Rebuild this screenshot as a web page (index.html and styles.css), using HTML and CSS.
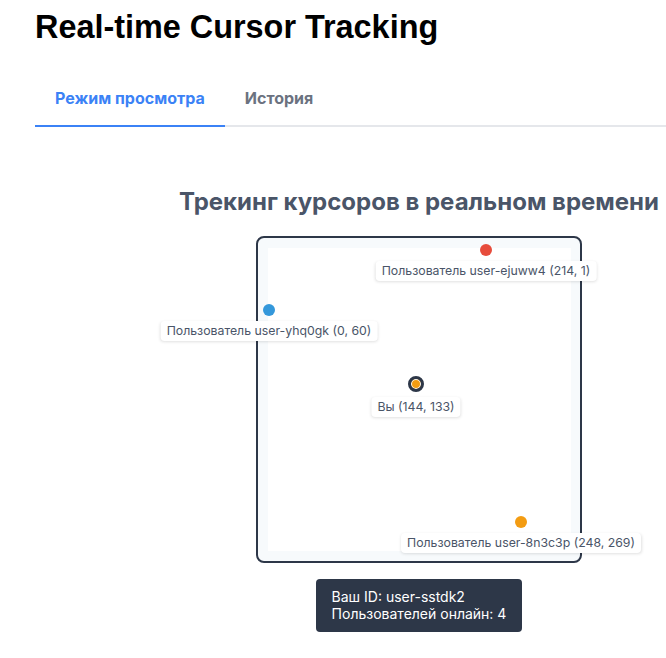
FILE: index.html
```html
<!DOCTYPE html>
<html lang="ru">
<head>
<meta charset="utf-8">
<link rel="stylesheet" href="styles.css">
</head>
<body>
<div class="app">
  <h1 class="title">Real-time Cursor Tracking</h1>
  <nav class="tabs">
    <div class="tab active">Режим просмотра</div>
    <div class="tab">История</div>
  </nav>
  <section class="tracker">
    <h2 class="tracker-title">Трекинг курсоров в реальном времени</h2>
    <div class="board">
      <div class="canvas"></div>
      <div class="cursor" style="left:228px; top:12px;">
        <span class="dot red"></span>
        <span class="label">Пользователь user-ejuww4 (214, 1)</span>
      </div>
      <div class="cursor" style="left:11px; top:72px;">
        <span class="dot blue"></span>
        <span class="label">Пользователь user-yhq0gk (0, 60)</span>
      </div>
      <div class="cursor me" style="left:158px; top:146px;">
        <span class="dot orange self"></span>
        <span class="label">Вы (144, 133)</span>
      </div>
      <div class="cursor" style="left:263px; top:284px;">
        <span class="dot orange"></span>
        <span class="label">Пользователь user-8n3c3p (248, 269)</span>
      </div>
    </div>
    <div class="info">
      <div>Ваш ID: user-sstdk2</div>
      <div>Пользователей онлайн: 4</div>
    </div>
  </section>
</div>
</body>
</html>
```

FILE: styles.css
```css
html, body {
  margin: 0;
  padding: 0;
  background: #ffffff;
  overflow: hidden;
}

.app {
  width: 768px;
  padding: 4px 0 0 35px;
}

.title {
  margin: 0;
  font-family: "Liberation Sans", Arial, sans-serif;
  font-weight: 700;
  font-size: 32.4px;
  line-height: 46px;
  color: #000;
}

.tabs {
  display: flex;
  margin-top: 26px;
  border-bottom: 2px solid #e5e7eb;
  font-family: Inter, "Noto Sans", sans-serif;
  font-weight: 700;
  font-size: 16px;
}

.tab {
  padding: 12px 20px 17px;
  margin-bottom: -2px;
  color: #6b7280;
  border-bottom: 2px solid transparent;
  line-height: 20px;
}

.tab.active {
  color: #3b82f6;
  border-bottom-color: #3b82f6;
}

.tracker {
  display: flex;
  flex-direction: column;
  align-items: center;
  font-family: Inter, "Noto Sans", sans-serif;
}

.tracker-title {
  margin: 60px 0 19px;
  font-size: 24px;
  line-height: 30px;
  font-weight: 700;
  color: #4a5568;
}

.board {
  position: relative;
  width: 303px;
  height: 303px;
  padding: 10px 9px 10px 10px;
  border: 2px solid #2d3748;
  border-radius: 8px;
  background: #f7fafc;
}

.canvas {
  width: 100%;
  height: 100%;
  background: #ffffff;
}

.cursor {
  position: absolute;
  width: 0;
  height: 0;
}

.dot {
  position: absolute;
  left: -6px;
  top: -6px;
  width: 12px;
  height: 12px;
  border-radius: 50%;
}

.dot.red { background: #e74c3c; }
.dot.blue { background: #3498db; }
.dot.orange { background: #f39c12; }

.dot.self {
  left: -8px;
  top: -8px;
  width: 10px;
  height: 10px;
  border: 3px solid #2d3748;
  box-shadow: inset 0 0 0 1px #ffffff;
}

.label {
  position: absolute;
  top: 11px;
  left: 0;
  transform: translateX(-50%);
  white-space: nowrap;
  padding: 2px 6px;
  background: #ffffff;
  border-radius: 4px;
  box-shadow: 0 1px 3px rgba(0, 0, 0, 0.12);
  font-size: 12.3px;
  line-height: 16px;
  color: #4a5568;
}

.me .label {
  top: 13px;
}

.info {
  margin-top: 16px;
  padding: 9px 16px 10px;
  background: #2d3748;
  border-radius: 4px;
  color: #ffffff;
  font-size: 14px;
  line-height: 17px;
}
```
